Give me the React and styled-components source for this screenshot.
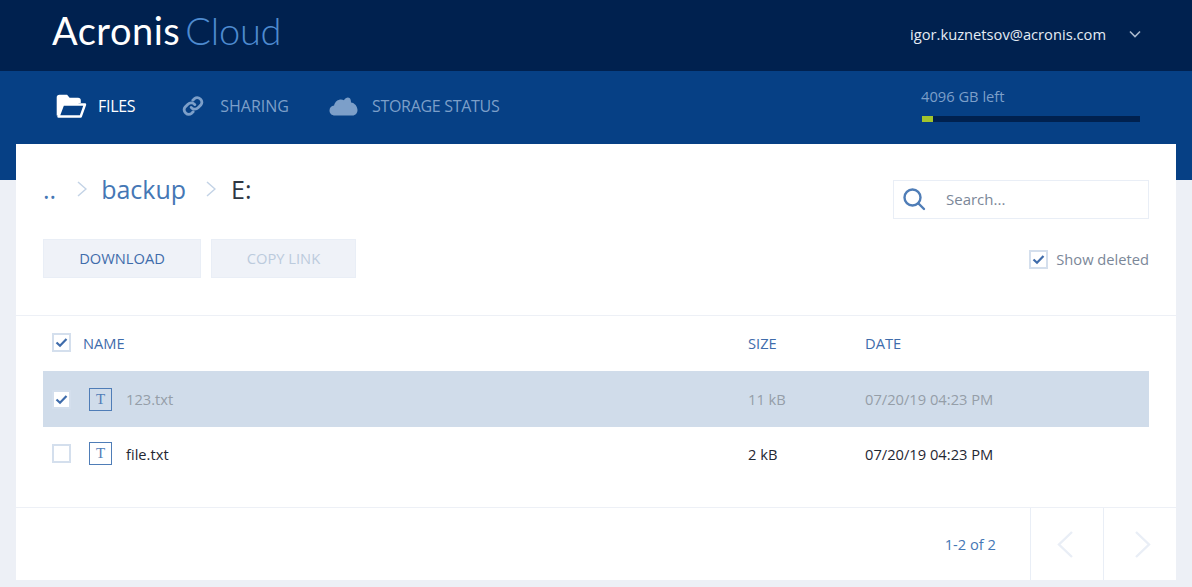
import React from 'react';
import styled, { createGlobalStyle } from 'styled-components';

const Global = createGlobalStyle`
  html, body {
    margin: 0;
    padding: 0;
    background: #edf0f6;
    font-family: "Open Sans", "Noto Sans", sans-serif;
    overflow: hidden;
  }
  * { box-sizing: border-box; }
`;

const Page = styled.div`
  width: 1192px;
  height: 587px;
  overflow: hidden;
`;

const TopBar = styled.header`
  height: 71px;
  background: #00214f;
  display: flex;
  align-items: center;
  justify-content: space-between;
  padding: 0 51px 8px 52px;
`;

const Logo = styled.div`
  display: flex;
  align-items: baseline;
  gap: 5px;
  font-family: Lato, sans-serif;
  font-size: 38px;
  line-height: 42px;
  margin-top: -3px;
`;

const LogoMain = styled.span`
  color: #fff;
  font-weight: 400;
  letter-spacing: 0.5px;
`;

const LogoSub = styled.span`
  color: #4e8bd0;
  font-weight: 300;
  letter-spacing: -0.2px;
`;

const UserMenu = styled.div`
  display: flex;
  align-items: center;
  gap: 23px;
  color: #e4ebf4;
  font-size: 14.7px;
  padding-top: 4px;
`;

const NavBand = styled.div`
  height: 109px;
  background: #064085;
  display: flex;
  justify-content: space-between;
  padding: 0 52px 0 56px;
`;

const Tabs = styled.nav`
  display: flex;
  height: 70px;
  align-items: center;
`;

const Tab = styled.div`
  display: flex;
  align-items: center;
  gap: ${p => p.$gap}px;
  margin-right: ${p => p.$after ?? 0}px;
  font-size: 16px;
  letter-spacing: ${p => p.$spacing ?? -0.3}px;
  color: ${p => (p.$active ? '#fff' : '#7c9fc9')};
`;

const Quota = styled.div`
  width: 219px;
  padding-top: 16px;
  color: #7c9fc9;
  font-size: 14.7px;
  line-height: 19px;
`;

const QuotaTrack = styled.div`
  height: 6px;
  margin: 10px 0 0 1px;
  background: #00214f;
`;

const QuotaFill = styled.div`
  height: 100%;
  background: #a2c42c;
`;

const Card = styled.main`
  margin: -36px 16px 0;
  height: 436px;
  background: #fff;
  display: flex;
  flex-direction: column;
`;

const Toolbar = styled.section`
  height: 172px;
  padding: 36px 27px 0;
  display: flex;
  justify-content: space-between;
  border-bottom: 1px solid #edf0f6;
`;

const ToolbarColumn = styled.div`
  display: flex;
  flex-direction: column;
  align-items: ${p => (p.$end ? 'flex-end' : 'flex-start')};
`;

const Breadcrumbs = styled.div`
  display: flex;
  align-items: center;
  height: 22px;
  margin-top: -2px;
  margin-bottom: 1px;
  font-size: 25px;
  line-height: 22px;
  color: #4577b5;
`;

const CrumbSep = styled.svg`
  width: 10px;
  height: 16px;
  margin: 0 ${p => p.$right}px 0 ${p => p.$left}px;
  fill: none;
  stroke: #c3d3e6;
  stroke-width: 1.5;
`;

const CrumbCurrent = styled.span`
  color: #2e3642;
`;

const Buttons = styled.div`
  display: flex;
  gap: 10px;
  margin-top: 38px;
`;

const Button = styled.button`
  width: ${p => p.$width}px;
  height: 39px;
  padding: 0 0 2px;
  background: #eff2f8;
  border: 1px solid #e9eef6;
  color: ${p => (p.disabled ? '#bccbdd' : '#3f6cab')};
  font-family: inherit;
  font-size: 14.7px;
`;

const Search = styled.div`
  width: 256px;
  height: 39px;
  border: 1px solid #e9eef6;
  display: flex;
  align-items: center;
  padding: 0 0 2px 8px;
  gap: 20px;
  color: #7b8798;
  font-size: 15px;
`;

const ShowDeleted = styled.label`
  display: flex;
  align-items: center;
  gap: 8px;
  margin-top: 30px;
  color: #7b8798;
  font-size: 14.7px;
  line-height: 20px;
`;

const Box = styled.span`
  width: 19px;
  height: 19px;
  flex: none;
  display: flex;
  align-items: center;
  justify-content: center;
  background: #fff;
  border: 2px solid #d4dfed;
`;

const Table = styled.section`
  flex: 1;
  padding: 0 27px;
  border-bottom: 1px solid #edf0f6;
`;

const Row = styled.div`
  display: grid;
  grid-template-columns: 37px 37px 1fr 117px 284px;
  align-items: center;
  padding: 0 0 ${p => (p.$selected ? 0 : 2)}px 9px;
  height: ${p => p.$height}px;
  font-size: 14.7px;
  background: ${p => (p.$selected ? '#d0dcea' : 'transparent')};
  color: ${p => (p.$selected ? '#959ea8' : '#1f2733')};
`;

const HeadRow = styled(Row)`
  color: #3f6cab;
  grid-template-columns: 31px 1fr 117px 284px;
`;

const FileIcon = styled.span`
  width: 23px;
  height: 23px;
  border: 1px solid #4f7db7;
  display: flex;
  align-items: center;
  justify-content: center;
  color: #4f7db7;
  font-family: "Liberation Serif", serif;
  font-size: 15px;
`;

const Pager = styled.footer`
  height: 72px;
  display: flex;
  justify-content: flex-end;
  align-items: stretch;
`;

const PagerCount = styled.div`
  display: flex;
  align-items: center;
  padding-right: 34px;
  color: #4577b5;
  font-size: 14.7px;
`;

const PagerButton = styled.div`
  width: 73px;
  display: flex;
  align-items: center;
  justify-content: center;
  border-left: 1px solid #e9eef6;
  padding-right: ${p => (p.$prev ? 5 : 0)}px;
  padding-left: ${p => (p.$prev ? 0 : 6)}px;
`;

const Check = () => (
  <svg width="13" height="11" viewBox="0 0 13 11" fill="none">
    <path d="M1.5 5.5 5 8.8 11.5 2" stroke="#3f6cab" strokeWidth="2.2" />
  </svg>
);

const Chevron = ({ left }) => (
  <svg width="16" height="27" viewBox="0 0 16 27" fill="none">
    <path d={left ? 'M15 1 2 13.500l13 12.500' : 'M1 1l13 12.500L1 26'} stroke="#e9eef6" strokeWidth="2.4" />
  </svg>
);

const Files = [
  { name: '123.txt', size: '11 kB', date: '07/20/19 04:23 PM', selected: true },
  { name: 'file.txt', size: '2 kB', date: '07/20/19 04:23 PM', selected: false },
];

export default function App() {
  return (
    <Page>
      <Global />
      <TopBar>
        <Logo>
          <LogoMain>Acronis</LogoMain>
          <LogoSub>Cloud</LogoSub>
        </Logo>
        <UserMenu>
          igor.kuznetsov@acronis.com
          <svg width="12" height="8" viewBox="0 0 12 8" fill="none">
            <path d="M1 1.5 6 6.5l5-5" stroke="#a9b8cc" strokeWidth="1.6" />
          </svg>
        </UserMenu>
      </TopBar>
      <NavBand>
        <Tabs>
          <Tab $active $gap={11} $after={47}>
            <svg width="31" height="24" viewBox="0 0 31 24" fill="none">
              <path d="M2 21.5V3.5C2 2.6 2.6 2 3.5 2h7l2.500 3H22c1 0 1.500.6 1.500 1.500V9" stroke="#fff" strokeWidth="2.600" fill="#fff" />
              <path d="M2.500 22.500 7 10.500h22l-4.300 12z" fill="#064085" stroke="#fff" strokeWidth="2.400" strokeLinejoin="round" />
            </svg>
            FILES
          </Tab>
          <Tab $gap={16} $spacing={0} $after={40}>
            <svg width="22" height="22" viewBox="0 0 24 24" fill="none" stroke="#7c9fc9" strokeWidth="3" strokeLinecap="round">
              <path d="M10 13.500a5 5 0 0 0 7.500.5l3-3a5 5 0 0 0-7-7l-1.700 1.700" />
              <path d="M14 10.500a5 5 0 0 0-7.500-.5l-3 3a5 5 0 0 0 7 7l1.700-1.700" />
            </svg>
            SHARING
          </Tab>
          <Tab $gap={14}>
            <svg width="29" height="20" viewBox="0 0 29 20">
              <path d="M6 19.500C2.500 19.500.500 17.300.500 14.500c0-2.700 2-4.800 4.600-5C6 5.500 9 3.500 12 3.500c1 0 2 .2 3 .7C16.300 1.700 19 .8 20.500 2c1.200.9 1.500 2.700 1.500 4.500 3.800.4 6.500 4 6.500 7.500 0 3-2 5.500-5 5.500z" fill="#7c9fc9" />
            </svg>
            STORAGE STATUS
          </Tab>
        </Tabs>
        <Quota>
          4096 GB left
          <QuotaTrack>
            <QuotaFill style={{ width: `${(11 / 218) * 100}%` }} />
          </QuotaTrack>
        </Quota>
      </NavBand>
      <Card>
        <Toolbar>
          <ToolbarColumn>
            <Breadcrumbs>
              ..
              <CrumbSep $left={21} $right={14} viewBox="0 0 10 16"><path d="M1 1l8 7-8 7" /></CrumbSep>
              backup
              <CrumbSep $left={20} $right={15} viewBox="0 0 10 16"><path d="M1 1l8 7-8 7" /></CrumbSep>
              <CrumbCurrent>E:</CrumbCurrent>
            </Breadcrumbs>
            <Buttons>
              <Button $width={158}>DOWNLOAD</Button>
              <Button $width={145} disabled>COPY LINK</Button>
            </Buttons>
          </ToolbarColumn>
          <ToolbarColumn $end>
            <Search>
              <svg width="24" height="24" viewBox="0 0 24 24" fill="none" stroke="#4f7db7" strokeWidth="2.400">
                <circle cx="10.500" cy="10.500" r="8" />
                <path d="M16.500 16.500 22 22" strokeLinecap="round" />
              </svg>
              Search...
            </Search>
            <ShowDeleted>
              <Box><Check /></Box>
              Show deleted
            </ShowDeleted>
          </ToolbarColumn>
        </Toolbar>
        <Table>
          <HeadRow $height={55}>
            <Box><Check /></Box>
            <span>NAME</span>
            <span>SIZE</span>
            <span>DATE</span>
          </HeadRow>
          {Files.map(f => (
            <Row key={f.name} $height={f.selected ? 56 : 55} $selected={f.selected}>
              <Box>{f.selected && <Check />}</Box>
              <FileIcon>T</FileIcon>
              <span>{f.name}</span>
              <span>{f.size}</span>
              <span>{f.date}</span>
            </Row>
          ))}
        </Table>
        <Pager>
          <PagerCount>1-2 of 2</PagerCount>
          <PagerButton $prev><Chevron left /></PagerButton>
          <PagerButton><Chevron /></PagerButton>
        </Pager>
      </Card>
    </Page>
  );
}
